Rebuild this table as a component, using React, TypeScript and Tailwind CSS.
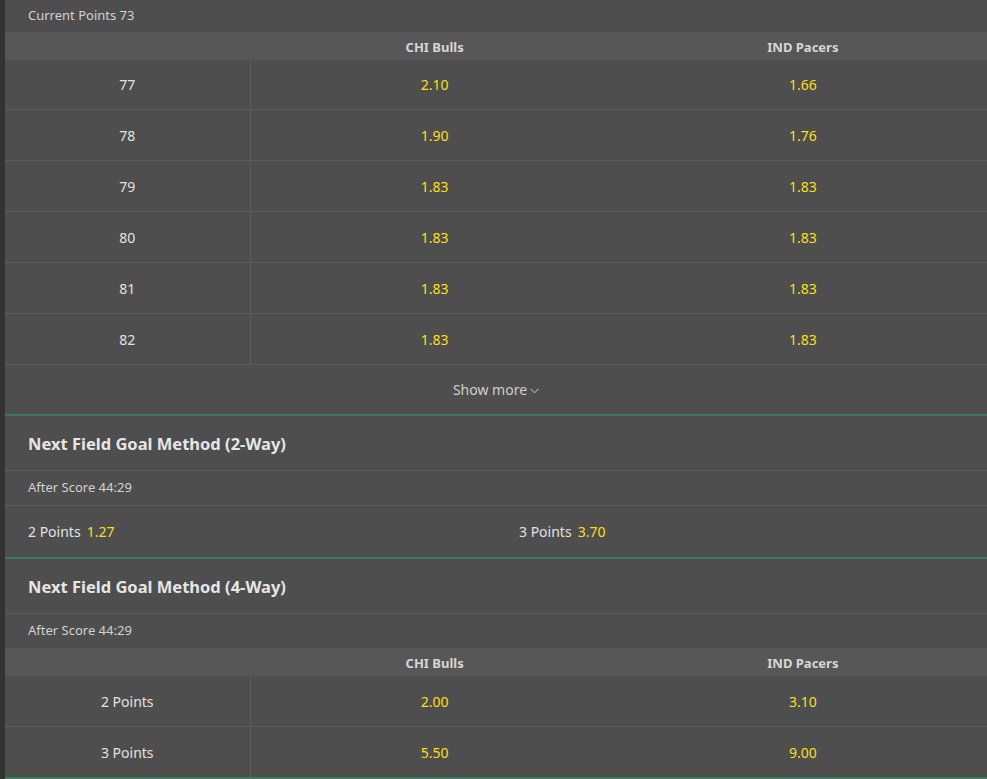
const teams = ['CHI Bulls', 'IND Pacers'];

const pointsRows = [
  { label: '77', odds: ['2.10', '1.66'] },
  { label: '78', odds: ['1.90', '1.76'] },
  { label: '79', odds: ['1.83', '1.83'] },
  { label: '80', odds: ['1.83', '1.83'] },
  { label: '81', odds: ['1.83', '1.83'] },
  { label: '82', odds: ['1.83', '1.83'] },
];

const methodRows = [
  { label: '2 Points', odds: ['2.00', '3.10'] },
  { label: '3 Points', odds: ['5.50', '9.00'] },
];

type Row = { label: string; odds: string[] };

function OddsTable({ rows, rowHeights, lastBorder }: { rows: Row[]; rowHeights: string[]; lastBorder: boolean }) {
  return (
    <div>
      <div className="h-[28px] pt-[3px] grid grid-cols-[25%_37.5%_37.5%] items-center bg-[#575757] text-[13px] font-bold text-[#d6d6d6]">
        <div></div>
        {teams.map((t) => (
          <div key={t} className="text-center">{t}</div>
        ))}
      </div>
      {rows.map((r, i) => (
        <div
          key={r.label}
          className={`grid grid-cols-[25%_37.5%_37.5%] text-[14px] ${rowHeights[i]} ${i < rows.length - 1 || lastBorder ? 'border-b border-[#5d5d5d]' : ''}`}
        >
          <div className="flex items-center justify-center text-[#e2e2e2] border-r border-[#5d5d5d]">{r.label}</div>
          {r.odds.map((o, j) => (
            <div key={j} className="flex items-center justify-center text-[#ffdf1b]">{o}</div>
          ))}
        </div>
      ))}
    </div>
  );
}

function MarketTitle({ text }: { text: string }) {
  return (
    <div className="h-[55px] pt-[2px] flex items-center px-[23px] text-[16.5px] font-bold text-[#e6e6e6] border-b border-[#5d5d5d]">
      {text}
    </div>
  );
}

export default function App() {
  return (
    <div className="w-[987px] h-[779px] overflow-hidden bg-[#333333] pl-[5px] font-['Segoe_UI','Noto_Sans',sans-serif]">
      <div className="bg-[#4e4e4e] h-full">
        {/* Points market */}
        <div className="h-[32px] flex items-center px-[23px] text-[13px] text-[#d2d2d2]">Current Points 73</div>
        <OddsTable
          rows={pointsRows}
          rowHeights={['h-[50px]', 'h-[51px]', 'h-[51px]', 'h-[51px]', 'h-[51px]', 'h-[51px]']}
          lastBorder
        />
        <div className="h-[49px] flex items-center justify-center text-[14px] text-[#cfcfcf]">
          Show more
          <svg width="9" height="6" viewBox="0 0 9 6" className="ml-[3px] mt-[2px]" fill="none" stroke="#cfcfcf" strokeWidth="1">
            <path d="M0.5 0.8 L4.5 4.8 L8.5 0.8" />
          </svg>
        </div>

        {/* 2-way */}
        <div className="border-t-[2px] border-[#3c7a62]">
          <MarketTitle text="Next Field Goal Method (2-Way)" />
          <div className="h-[35px] flex items-center px-[23px] text-[13px] text-[#d2d2d2] border-b border-[#5d5d5d]">
            After Score 44:29
          </div>
          <div className="h-[51px] grid grid-cols-2 text-[14px]">
            <div className="flex items-center px-[23px] text-[#e2e2e2]">
              2 Points<span className="ml-[6px] text-[#ffdf1b]">1.27</span>
            </div>
            <div className="flex items-center px-[23px] text-[#e2e2e2]">
              3 Points<span className="ml-[6px] text-[#ffdf1b]">3.70</span>
            </div>
          </div>
        </div>

        {/* 4-way */}
        <div className="border-t-[2px] border-[#3c7a62]">
          <MarketTitle text="Next Field Goal Method (4-Way)" />
          <div className="h-[34px] flex items-center px-[23px] text-[13px] text-[#d2d2d2]">After Score 44:29</div>
          <OddsTable rows={methodRows} rowHeights={['h-[51px]', 'h-[50px]']} lastBorder={false} />
        </div>
        <div className="border-t-[2px] border-[#3c7a62]"></div>
      </div>
    </div>
  );
}
